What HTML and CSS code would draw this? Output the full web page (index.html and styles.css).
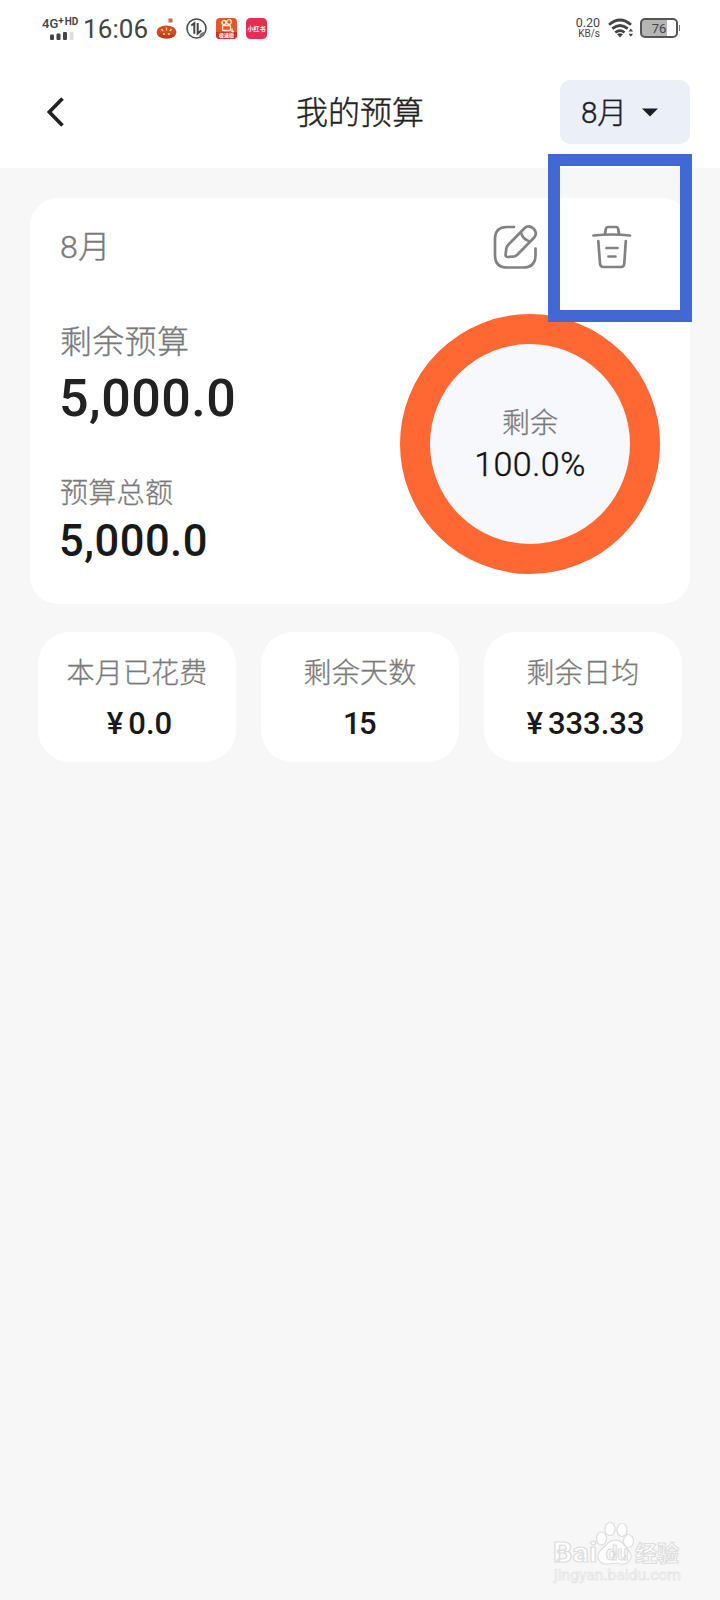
FILE: index.html
```html
<!DOCTYPE html>
<html lang="zh-CN">
<head>
<meta charset="utf-8">
<title>我的预算</title>
<link rel="stylesheet" href="styles.css">
</head>
<body>
<div class="screen">
  <div class="status">
    <div class="status-left">
      <div class="signal">
        <div class="network"><span class="gen">4G</span><span class="plus">+</span><span class="hd">HD</span></div>
        <svg class="bars" width="24" height="8" viewBox="0 0 24 8">
          <rect x="0" y="2.5" width="4" height="5.5" rx="1" fill="#444"/>
          <rect x="6.5" y="1.5" width="4" height="6.5" rx="1" fill="#444"/>
          <rect x="13" y="0" width="4" height="8" rx="1" fill="#444"/>
          <rect x="19.5" y="0" width="4" height="8" rx="1" fill="#ddd"/>
        </svg>
      </div>
      <span class="clock">16:06</span>
      <svg class="app" width="21" height="21" viewBox="0 0 21 21">
        <rect x="12.5" y="0.5" width="4" height="4" fill="#b96f58"/>
        <ellipse cx="10.5" cy="14" rx="10" ry="6.6" fill="#d34c25"/>
        <path d="M2 18q8.500 5 17 0l-2-2q-6.500 3-13 0z" fill="#c0391b"/>
        <path d="M5.500 11l1.500 2M10.500 9.500v3M15.500 11l-1.500 2M7 16h2M12 16h2" stroke="#ffd9a0" stroke-width="1.300" fill="none"/>
      </svg>
      <svg class="app" width="21" height="21" viewBox="0 0 21 21">
        <circle cx="10.500" cy="10.500" r="9.500" fill="none" stroke="#4c4c4c" stroke-width="1.600"/>
        <path d="M5.300 7.500l3-2.200v10.500M11.700 5v10.500l3.500-3" fill="none" stroke="#444" stroke-width="2"/>
        <path d="M13 19.500q0-5 6.500-6-1.500 5-6.500 6z" fill="#777"/>
      </svg>
      <svg class="app" width="21" height="21" viewBox="0 0 21 21">
        <rect width="21" height="21" rx="4" fill="#e5562c"/>
        <path d="M0 14h21v3a4 4 0 0 1-4 4H4a4 4 0 0 1-4-4z" fill="#cf2f28"/>
        <g fill="none" stroke="#fff0dc" stroke-width="1.300"><circle cx="8" cy="4.500" r="2"/><circle cx="13" cy="4" r="2.300"/><rect x="6.500" y="7.500" width="8" height="5" rx="1"/><path d="M16 10.500v3h2"/></g>
        <text x="10.500" y="19.300" class="tiny-a">极速版</text>
      </svg>
      <svg class="app" width="21" height="21" viewBox="0 0 21 21">
        <rect width="21" height="21" rx="4.500" fill="#e72d51"/>
        <text x="10.500" y="13" class="tiny-b">小红书</text>
      </svg>
    </div>
    <div class="status-right">
      <div class="speed"><span class="rate">0.20</span><span class="unit">KB/s</span></div>
      <svg class="wifi" width="26" height="20" viewBox="0 0 26 20">
        <g fill="none" stroke="#444" stroke-width="2.800"><path d="M1 6.700Q12 -2.800 23 6.700"/><path d="M4.300 10.700Q12 4.300 19.700 10.700"/><path d="M7.300 14.500Q12 10.800 16.500 14.500"/></g>
        <path d="M9 16.200q3-1.800 6 0l-3 3.300z" fill="#444"/>
        <path d="M20.500 13.500l2.300-3 2.300 3zM20.500 15.800l2.300 3 2.300-3z" fill="#444"/>
      </svg>
      <div class="battery"><span class="level">76</span></div><span class="tip"></span>
    </div>
  </div>

  <header class="bar">
    <svg class="back" width="20" height="30" viewBox="0 0 20 30"><path d="M15.500 1.500L2.300 15L15.500 28.500" fill="none" stroke="#222" stroke-width="3.700"/></svg>
    <h1 class="title">我的预算</h1>
    <div class="month"><span class="month-name">8月</span><svg width="16" height="9" viewBox="0 0 16 9"><path d="M0 .5h16L8 8.500z" fill="#1c1e26"/></svg></div>
  </header>

  <main class="content">
    <section class="card">
      <div class="card-head">
        <span class="card-month">8月</span>
        <svg class="edit" width="46" height="46" viewBox="0 0 46 46" fill="none" stroke="#828282" stroke-width="2.700" stroke-linecap="round" stroke-linejoin="round">
          <path d="M21 3H14Q2 3 2 15V31Q2 43.500 14 43.500H30Q42.500 43.500 42.500 31V24.500"/>
          <path d="M16 20L31.500 4.300Q35.500 0.500 40.500 4.500Q45 9 41 13.800L24 31Q23 32 21.500 32.300L15 33Q12.300 33 12.600 30.500L13.300 24.500Q13.700 22.300 16 20Z"/>
          <path d="M28 8.500Q29.500 15.500 37 17.500"/>
        </svg>
        <svg class="trash" width="40" height="44" viewBox="0 0 40 44" fill="none" stroke="#828282" stroke-width="2.700" stroke-linecap="round" stroke-linejoin="round">
          <path d="M1.500 10.500Q20 8.500 38 10.500M13 9L13.800 4Q14.200 2 16.200 2H24Q25.800 2 26.200 4L27 9M6.300 16L8 38.500Q8.300 42 11.500 42H29Q32 42 32.300 38.500L33.800 16M14.500 23H25.500M16.500 31.500H23.500"/>
        </svg>
      </div>
      <div class="card-body">
        <div class="figures">
          <div class="label-large">剩余预算</div>
          <div class="amount-large">5,000.0</div>
          <div class="label">预算总额</div>
          <div class="amount">5,000.0</div>
        </div>
        <div class="ring">
          <div class="ring-label">剩余</div>
          <div class="ring-value">100.0%</div>
        </div>
      </div>
    </section>

    <section class="stats">
      <div class="stat"><div class="stat-label">本月已花费</div><div class="stat-value money"><span class="yen">¥</span>0.0</div></div>
      <div class="stat"><div class="stat-label">剩余天数</div><div class="stat-value tight">15</div></div>
      <div class="stat"><div class="stat-label">剩余日均</div><div class="stat-value money"><span class="yen">¥</span>333.33</div></div>
    </section>
  </main>

  <div class="highlight"></div>

  <svg class="watermark" width="140" height="70" viewBox="0 0 140 70">
    <g fill="#fff" stroke="#dedede" stroke-width="1.200">
      <ellipse cx="60.500" cy="18.500" rx="5" ry="6.500"/>
      <ellipse cx="69" cy="9" rx="5" ry="6.500"/>
      <ellipse cx="81" cy="10" rx="5" ry="6.500"/>
      <ellipse cx="87.500" cy="21" rx="5" ry="6.500"/>
      <path d="M75 20c7 0 9 7 13 11 5 6 0 14-8 13-4-1-8-1-12 0-9 1-14-6-9-13 5-4 8-11 16-11z"/>
      <text x="12" y="42" class="wm-name" textLength="44" lengthAdjust="spacingAndGlyphs">Bai</text>
      <text x="65" y="40" class="wm-du">du</text>
      <text x="94" y="40.500" class="wm-cn">经验</text>
      <text x="13" y="60" class="wm-url" textLength="127" lengthAdjust="spacingAndGlyphs">jingyan.baidu.com</text>
    </g>
  </svg>
</div>
</body>
</html>
```
FILE: styles.css
```css
* { box-sizing: border-box; }
body { margin: 0; background: #f7f7f7; font-family: Roboto, "Noto Sans CJK SC", sans-serif; color: #222; }
svg { display: block; flex: none; }
.screen { position: relative; width: 720px; height: 1600px; overflow: hidden; }

.status { display: flex; justify-content: space-between; height: 56px; padding: 0 40px 0 42px; background: #fff; color: #444; }
.status-left, .status-right { display: flex; align-items: center; height: 56px; }
.signal { width: 38px; padding-top: 1px; }
.network { display: flex; height: 15px; font-weight: 500; line-height: 14px; }
.gen { font-size: 13px; line-height: 13px; }
.plus { font-size: 10px; line-height: 7px; font-weight: 700; }
.hd { margin-left: 1px; font-size: 10px; line-height: 10px; font-weight: 700; }
.bars { margin: 0 0 0 8px; }
.clock { width: 73px; margin-left: 3px; padding-top: 1px; font-size: 26px; line-height: 30px; letter-spacing: 0.1px; white-space: nowrap; }
.app { margin-right: 9px; }
.tiny-a { font-size: 5px; font-weight: 700; fill: #fff; text-anchor: middle; }
.tiny-b { font-size: 6px; font-weight: 700; fill: #fff; text-anchor: middle; }
.speed { display: flex; flex-direction: column; align-items: flex-end; width: 27px; margin-right: 1px; }
.rate { font-size: 12.5px; line-height: 12px; }
.unit { font-size: 10px; line-height: 10px; }
.wifi { margin-left: 7px; }
.battery { width: 38px; height: 20px; margin-left: 6px; padding: 1px; border: 2px solid #555; border-radius: 5px; background: linear-gradient(90deg, #b5b5b5 75%, #fff 75%); }
.level { display: block; font-size: 13px; line-height: 15px; text-align: center; }
.tip { width: 1px; height: 6px; margin-left: 1px; background: #777; }

.bar { display: grid; grid-template-columns: 130px 1fr 130px; align-items: center; height: 112px; padding: 0 30px; background: #fff; }
.back { margin-left: 17px; }
.title { margin: 0; padding-top: 2px; font-size: 32px; line-height: 44px; font-weight: 300; text-align: center; -webkit-text-stroke: 0.4px; }
.month { display: flex; align-items: center; justify-content: space-between; height: 64px; padding: 0 32px 0 21px; border-radius: 10px; background: #ebeff7; font-size: 29.5px; font-weight: 300; color: #1c1e26; -webkit-text-stroke: 0.4px; }
.month-name { line-height: 40px; padding-top: 1px; }

.content { padding: 30px; }
.card { height: 406px; padding: 0 30px; border-radius: 28px; background: #fff; }
.card-head { display: flex; align-items: center; height: 97px; color: #7a7a7a; }
.card-month { flex: 1; margin-top: -6px; font-size: 32px; font-weight: 300; letter-spacing: 0.5px; -webkit-text-stroke: 0.4px; }
.edit { margin-right: 53px; }
.trash { margin-right: 28px; }
.card-body { display: flex; justify-content: space-between; }
.figures { padding-top: 27px; }
.label-large, .label, .ring-label, .stat-label { font-weight: 300; color: #7a7a7a; -webkit-text-stroke: 0.3px; }
.label-large { font-size: 32px; line-height: 40px; letter-spacing: 0.3px; }
.amount-large { margin: 7px 0 47px; font-size: 52px; line-height: 60px; font-weight: 500; letter-spacing: 0.5px; }
.label { font-size: 28px; line-height: 36px; letter-spacing: 0.3px; }
.amount { margin-top: 5px; font-size: 43.5px; line-height: 50px; font-weight: 500; letter-spacing: 0.5px; color: #191919; }
.amount-large, .amount { margin-left: -1px; }
.ring { width: 260px; height: 260px; margin-top: 19px; padding-top: 60px; border: 30px solid #ff6832; border-radius: 50%; background: #f7f8fc; text-align: center; }
.ring-label { font-size: 28px; line-height: 40px; }
.ring-value { margin-top: -2px; font-size: 34px; line-height: 44px; font-weight: 300; letter-spacing: 0.5px; color: #111; -webkit-text-stroke: 0.4px; }

.stats { display: grid; grid-template-columns: repeat(3, 198px); gap: 25px; padding: 28px 8px 0; }
.stat { height: 130px; padding-top: 24px; border-radius: 32px; background: #fff; text-align: center; }
.stat-label { font-size: 28px; line-height: 36px; letter-spacing: 0.2px; }
.stat-value { margin-top: 10px; font-size: 31px; line-height: 44px; font-weight: 500; color: #191919; }
.money { padding-left: 5px; }
.tight { padding-right: 2px; letter-spacing: -1.5px; }
.yen { margin-right: 5px; }

.highlight { position: absolute; left: 548px; top: 154px; width: 144px; height: 168px; border: 12px solid #4268d3; }
.watermark { position: absolute; left: 541px; top: 1520px; }
.wm-name { font: 700 27px/1 Roboto, sans-serif; }
.wm-du { font: 700 20px/1 Roboto, sans-serif; }
.wm-cn { font: 700 22px/1 "Noto Sans CJK SC", sans-serif; }
.wm-url { font: 400 14px/1 Roboto, sans-serif; stroke: #e6e6e6; stroke-width: 0.8; }
```
